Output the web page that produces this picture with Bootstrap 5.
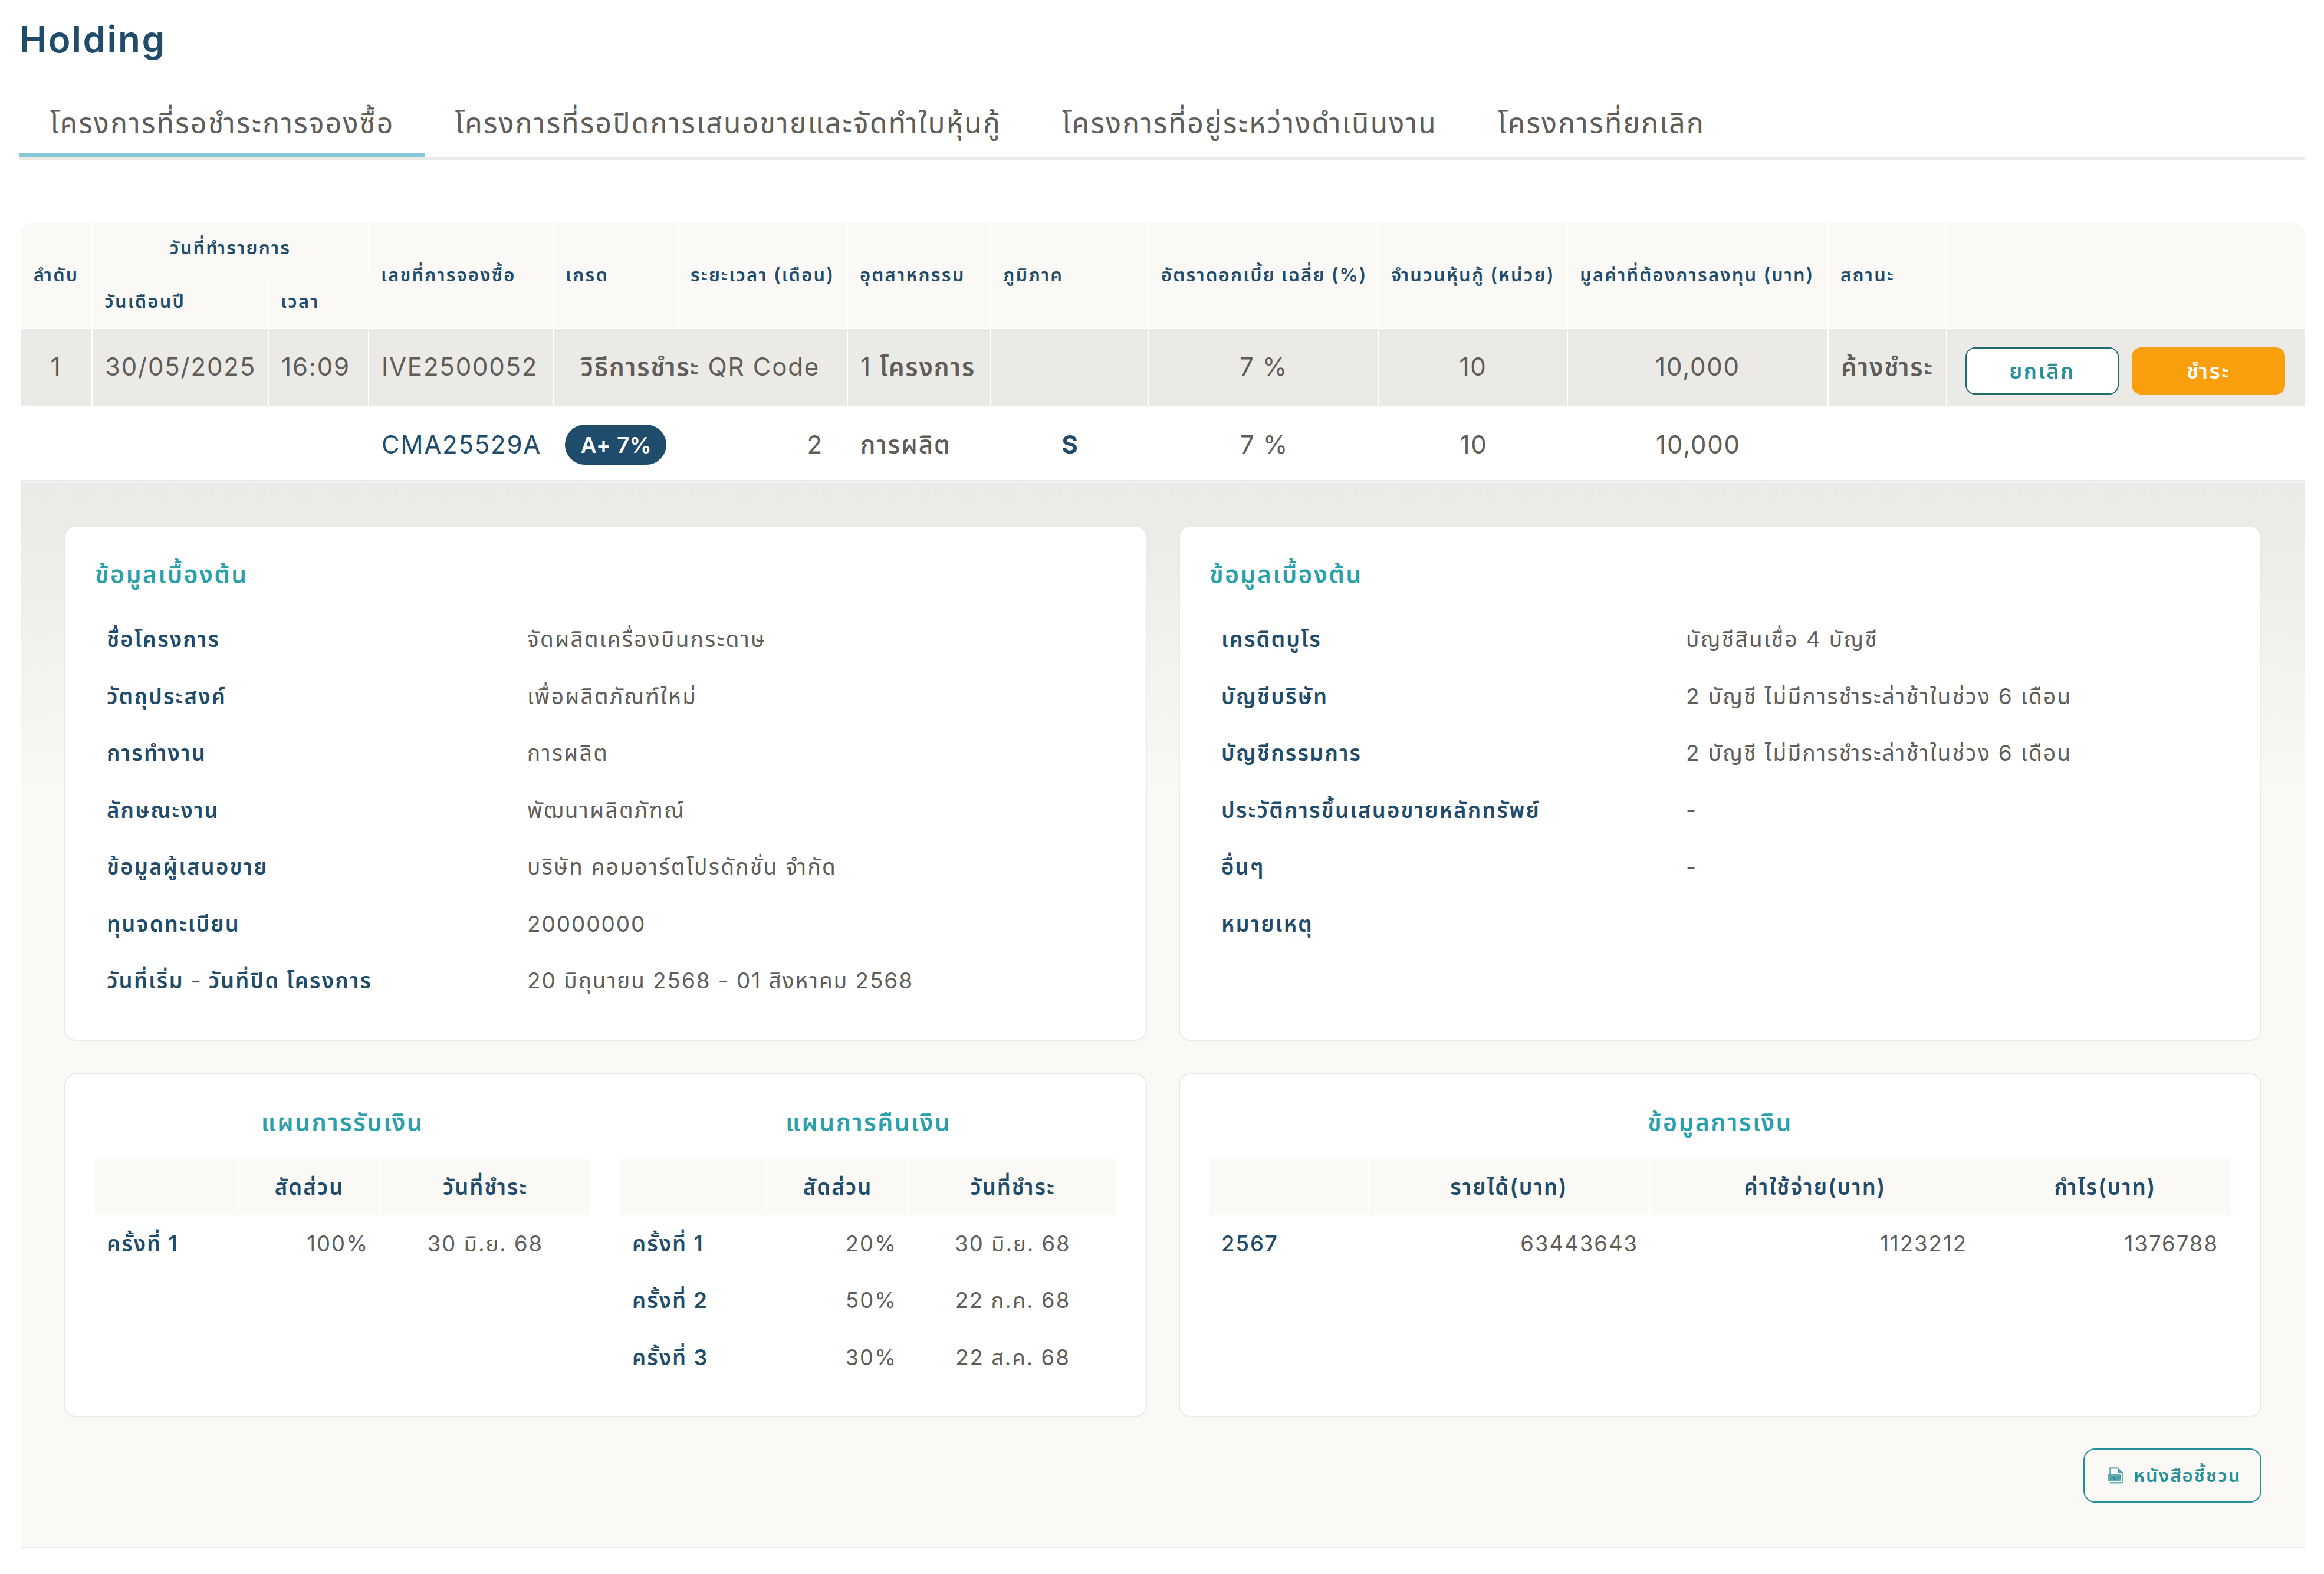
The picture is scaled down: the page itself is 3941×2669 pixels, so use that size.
<!DOCTYPE html>
<html lang="th">
<head>
    <meta charset="UTF-8">
    <meta name="viewport" content="width=device-width, initial-scale=1">
    <title>Holding</title>
    <link href="https://cdn.jsdelivr.net/npm/bootstrap@5.3.0/dist/css/bootstrap.min.css" rel="stylesheet">
    <style>
        :root {
            --navy: #1f4c6a;
            --teal: #2aa0aa;
            --teal-dark: #258f98;
            --ink: #605d59;
            --cream: #faf9f6;
            --stone: #ebeae6;
        }

        body {
            font-family: Inter, "Noto Sans Thai", sans-serif;
            color: var(--ink);
            padding: 36px 33px 0;
            overflow: hidden;
        }

        .page-title {
            font-size: 62px;
            line-height: 62px;
            font-weight: 600;
            letter-spacing: 2.4px;
            color: var(--navy);
            margin: 0 0 59px;
        }

        /* タブ */
        .holding-tabs { border-bottom: 5px solid var(--stone); }
        .holding-tabs .nav-link {
            font-size: 48px;
            line-height: 103px;
            letter-spacing: 2.3px;
            color: var(--ink);
            padding: 0 51px 0 52px;
            border-bottom: 6px solid transparent;
        }
        .holding-tabs .nav-link.active { border-bottom-color: #86c8da; }

        /* 予約一覧 */
        .booking {
            width: 3873px;
            margin: 106px 0 0 2px;
            table-layout: fixed;
            border-collapse: separate;
            border-spacing: 0;
            font-size: 42px;
            line-height: 60px;
            letter-spacing: 1.8px;
            white-space: nowrap;
        }
        .booking th {
            background: var(--cream);
            color: var(--navy);
            font-size: 31px;
            line-height: 40px;
            font-weight: 600;
            letter-spacing: 2.2px;
            padding: 0 0 1px 20px;
            border-right: 2px solid #fff;
            border-bottom: 2px solid #fff;
        }
        .booking th.text-center { padding-left: 0; }
        .booking td { padding: 0 0 3px 21px; height: 130px; }
        .booking td.text-center { padding-left: 0; }
        .booking .order td { background: var(--stone); border-right: 2px solid #fff; }
        .booking .order td:last-child, .booking th:last-child { border-right: 0; }
        .booking .project td { height: 126px; padding-top: 6px; padding-bottom: 0; }
        .booking .round-start { border-top-left-radius: 20px; }
        .booking .round-end { border-top-right-radius: 20px; }
        .navy { color: var(--navy); }

        .grade {
            width: 172px;
            height: 68px;
            border-radius: 34px;
            background: var(--navy);
            color: #fff;
            font-size: 37px;
            font-weight: 600;
            letter-spacing: .4px;
            padding: 1px 0 0 2px;
            margin-left: -2px;
        }

        .btn-order {
            width: 260px;
            height: 80px;
            padding: 0;
            border-radius: 16px;
            border-width: 2px;
            font-size: 36px;
            font-weight: 600;
            letter-spacing: 2.5px;
        }
        .btn-cancel { background: #fff; border-color: #1f6c6c; color: var(--teal-dark); }
        .btn-pay { background: #f99f0b; border-color: #f99f0b; color: #fff; }

        /* 詳細パネル */
        .detail {
            width: 3873px;
            height: 1811px;
            margin-left: 2px;
            padding: 75px 73px 0 74px;
            background: linear-gradient(#ebeae6, #ecebe7 90px, #faf9f6 530px);
            background-clip: padding-box;
            border-top: 2px solid #e4e6ea;
            border-bottom: 2px solid var(--stone);
            box-shadow: inset 0 3px 0 #f2f1ef;
        }
        .detail-grid { display: grid; grid-template-columns: 1836px 1836px; gap: 55px 54px; }
        .panel {
            background: #fff;
            border: 2px solid var(--stone);
            border-radius: 20px;
            padding: 51px 50px;
        }
        .panel-title {
            font-size: 41px;
            line-height: 60px;
            font-weight: 600;
            letter-spacing: 2.4px;
            color: var(--teal);
            margin: 0 0 32px;
        }
        .info { padding-left: 20px; font-size: 37px; line-height: 96.5px; letter-spacing: 2.35px; white-space: nowrap; }
        .info dt { width: 713px; font-size: 36.5px; font-weight: 600; letter-spacing: 2.15px; color: var(--navy); }
        .info dd { margin: 0; }
        .info .digits { letter-spacing: 1.9px; }
        .info-wide dt { width: 788px; }

        .plan {
            width: 100%;
            table-layout: fixed;
            border-collapse: separate;
            border-spacing: 0;
            font-size: 36.5px;
            line-height: 50px;
            letter-spacing: 2px;
            white-space: nowrap;
        }
        .plan th, .plan td { height: 96.4px; padding: 0; }
        .plan th { font-weight: 600; color: var(--navy); }
        .plan thead th { background: var(--cream); text-align: center; border-right: 2px solid #fff; }
        .plan thead th:last-child, .plan thead th.open { border-right: 0; }
        .plan tbody th { padding-left: 20px; }
        .plan .amount { text-align: right; padding-right: 21px; }

        .btn-doc {
            width: 302px;
            height: 92px;
            margin-top: 53px;
            padding: 0 0 0 40px;
            border: 2px solid var(--teal-dark);
            border-radius: 20px;
            color: var(--teal-dark);
            font-size: 31px;
            font-weight: 600;
            letter-spacing: 2.1px;
            gap: 18px;
        }
    </style>
</head>
<body>
    <h1 class="page-title">Holding</h1>

    <ul class="nav holding-tabs">
        <li class="nav-item"><a class="nav-link active" href="#">โครงการที่รอชำระการจองซื้อ</a></li>
        <li class="nav-item"><a class="nav-link" href="#">โครงการที่รอปิดการเสนอขายและจัดทำใบหุ้นกู้</a></li>
        <li class="nav-item"><a class="nav-link" href="#">โครงการที่อยู่ระหว่างดำเนินงาน</a></li>
        <li class="nav-item"><a class="nav-link" href="#">โครงการที่ยกเลิก</a></li>
    </ul>

    <table class="booking align-middle">
        <colgroup>
            <col style="width:122px"><col style="width:299px"><col style="width:170px"><col style="width:313px">
            <col style="width:212px"><col style="width:287px"><col style="width:243px"><col style="width:268px">
            <col style="width:390px"><col style="width:320px"><col style="width:442px"><col style="width:201px">
            <col style="width:606px">
        </colgroup>
        <thead>
            <tr style="height:89px">
                <th rowspan="2" class="text-center round-start">ลำดับ</th>
                <th colspan="2" class="text-center">วันที่ทำรายการ</th>
                <th rowspan="2">เลขที่การจองซื้อ</th>
                <th rowspan="2">เกรด</th>
                <th rowspan="2">ระยะเวลา (เดือน)</th>
                <th rowspan="2">อุตสาหกรรม</th>
                <th rowspan="2">ภูมิภาค</th>
                <th rowspan="2">อัตราดอกเบี้ย เฉลี่ย (%)</th>
                <th rowspan="2">จำนวนหุ้นกู้ (หน่วย)</th>
                <th rowspan="2">มูลค่าที่ต้องการลงทุน (บาท)</th>
                <th rowspan="2">สถานะ</th>
                <th rowspan="2" class="round-end"></th>
            </tr>
            <tr style="height:92px">
                <th>วันเดือนปี</th>
                <th>เวลา</th>
            </tr>
        </thead>
        <tbody>
            <tr class="order">
                <td class="text-center">1</td>
                <td>30/05/2025</td>
                <td>16:09</td>
                <td>IVE2500052</td>
                <td colspan="2" class="text-center"><span class="fw-semibold">วิธีการชำระ</span> QR Code</td>
                <td>1 <span class="fw-semibold">โครงการ</span></td>
                <td></td>
                <td class="text-center">7 %</td>
                <td class="text-center">10</td>
                <td class="text-center">10,000</td>
                <td class="fw-semibold">ค้างชำระ</td>
                <td>
                    <div class="d-flex" style="gap:22px;padding:14px 0 0 10px">
                        <button type="button" class="btn btn-order btn-cancel">ยกเลิก</button>
                        <button type="button" class="btn btn-order btn-pay">ชำระ</button>
                    </div>
                </td>
            </tr>
            <tr class="project">
                <td colspan="3"></td>
                <td class="navy">CMA25529A</td>
                <td><span class="grade d-flex align-items-center justify-content-center">A+ 7%</span></td>
                <td class="text-end" style="padding-right:42px">2</td>
                <td class="fw-medium">การผลิต</td>
                <td class="text-center fw-bold navy">S</td>
                <td class="text-center">7 %</td>
                <td class="text-center">10</td>
                <td class="text-center">10,000</td>
                <td colspan="2"></td>
            </tr>
        </tbody>
    </table>

    <div class="detail">
        <div class="detail-grid">
            <section class="panel">
                <h2 class="panel-title">ข้อมูลเบื้องต้น</h2>
                <dl class="info mb-0">
                    <div class="d-flex"><dt>ชื่อโครงการ</dt><dd>จัดผลิตเครื่องบินกระดาษ</dd></div>
                    <div class="d-flex"><dt>วัตถุประสงค์</dt><dd>เพื่อผลิตภัณฑ์ใหม่</dd></div>
                    <div class="d-flex"><dt>การทำงาน</dt><dd>การผลิต</dd></div>
                    <div class="d-flex"><dt>ลักษณะงาน</dt><dd>พัฒนาผลิตภัฑณ์</dd></div>
                    <div class="d-flex"><dt>ข้อมูลผู้เสนอขาย</dt><dd>บริษัท คอมอาร์ตโปรดักชั่น จำกัด</dd></div>
                    <div class="d-flex"><dt>ทุนจดทะเบียน</dt><dd class="digits">20000000</dd></div>
                    <div class="d-flex"><dt>วันที่เริ่ม <span class="fw-normal">-</span> วันที่ปิด โครงการ</dt><dd class="digits">20 มิถุนายน 2568 - 01 สิงหาคม 2568</dd></div>
                </dl>
            </section>

            <section class="panel">
                <h2 class="panel-title">ข้อมูลเบื้องต้น</h2>
                <dl class="info info-wide mb-0">
                    <div class="d-flex"><dt>เครดิตบูโร</dt><dd>บัญชีสินเชื่อ 4 บัญชี</dd></div>
                    <div class="d-flex"><dt>บัญชีบริษัท</dt><dd>2 บัญชี ไม่มีการชำระล่าช้าในช่วง 6 เดือน</dd></div>
                    <div class="d-flex"><dt>บัญชีกรรมการ</dt><dd>2 บัญชี ไม่มีการชำระล่าช้าในช่วง 6 เดือน</dd></div>
                    <div class="d-flex"><dt>ประวัติการขึ้นเสนอขายหลักทรัพย์</dt><dd>-</dd></div>
                    <div class="d-flex"><dt>อื่นๆ</dt><dd>-</dd></div>
                    <div class="d-flex"><dt>หมายเหตุ</dt><dd></dd></div>
                </dl>
            </section>

            <section class="panel d-flex" style="gap:52px">
                <div style="width:839px">
                    <h2 class="panel-title text-center">แผนการรับเงิน</h2>
                    <table class="plan">
                        <colgroup><col style="width:244px"><col style="width:241px"><col></colgroup>
                        <thead>
                            <tr><th></th><th>สัดส่วน</th><th>วันที่ชำระ</th></tr>
                        </thead>
                        <tbody>
                            <tr><th>ครั้งที่ 1</th><td class="amount">100%</td><td class="text-center">30 มิ.ย. 68</td></tr>
                        </tbody>
                    </table>
                </div>
                <div style="width:841px">
                    <h2 class="panel-title text-center">แผนการคืนเงิน</h2>
                    <table class="plan">
                        <colgroup><col style="width:249px"><col style="width:241px"><col></colgroup>
                        <thead>
                            <tr><th></th><th>สัดส่วน</th><th>วันที่ชำระ</th></tr>
                        </thead>
                        <tbody>
                            <tr><th>ครั้งที่ 1</th><td class="amount">20%</td><td class="text-center">30 มิ.ย. 68</td></tr>
                            <tr><th>ครั้งที่ 2</th><td class="amount">50%</td><td class="text-center">22 ก.ค. 68</td></tr>
                            <tr><th>ครั้งที่ 3</th><td class="amount">30%</td><td class="text-center">22 ส.ค. 68</td></tr>
                        </tbody>
                    </table>
                </div>
            </section>

            <section class="panel">
                <h2 class="panel-title text-center">ข้อมูลการเงิน</h2>
                <table class="plan">
                    <colgroup><col style="width:270px"><col style="width:478px"><col style="width:558px"><col></colgroup>
                    <thead>
                        <tr><th></th><th>รายได้(บาท)</th><th class="open">ค่าใช้จ่าย(บาท)</th><th>กำไร(บาท)</th></tr>
                    </thead>
                    <tbody>
                        <tr><th class="fw-medium">2567</th><td class="amount">63443643</td><td class="amount">1123212</td><td class="amount">1376788</td></tr>
                    </tbody>
                </table>
            </section>
        </div>

        <div class="d-flex justify-content-end">
            <button type="button" class="btn btn-doc d-flex align-items-center">
                <svg width="25" height="30" viewBox="0 0 25 30" fill="none" stroke="currentColor">
                    <path d="M3 1H17" opacity=".3" stroke-width="2"/>
                    <path d="M3 14V2.500H16L24 10V27H3" opacity=".65" stroke-width="2"/>
                    <path d="M16 2V10H24Z" fill="currentColor" stroke="none" opacity=".8"/>
                    <path d="M0 13H22V25H0Z" fill="currentColor" stroke="none" opacity=".7"/>
                    <path d="M4 22V17H7V20H4M10 17V22H12L13 20V18L12 17ZM16 22V16H21V20H16" stroke-width="1.300"/>
                    <path d="M2 28.500H24" opacity=".3" stroke-width="3"/>
                </svg>
                <span>หนังสือชี้ชวน</span>
            </button>
        </div>
    </div>
</body>
</html>
